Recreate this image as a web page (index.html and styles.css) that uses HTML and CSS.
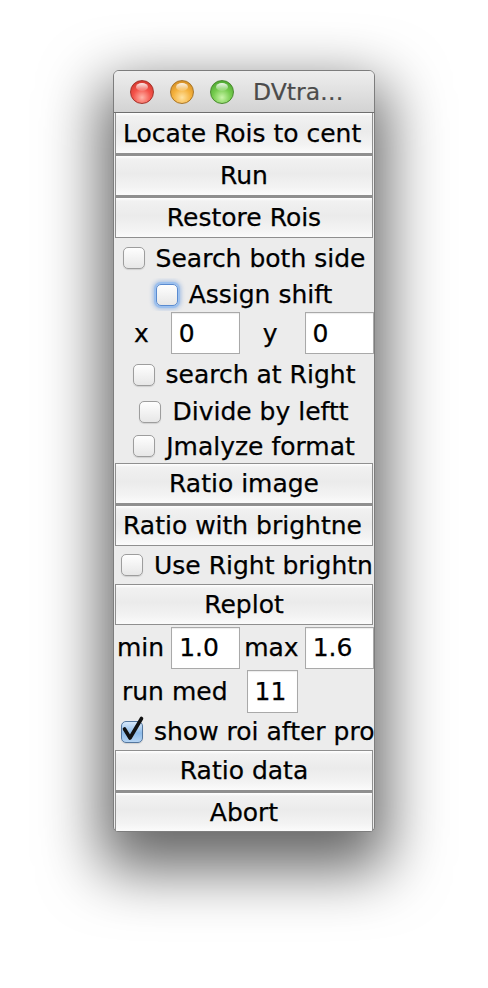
FILE: index.html
```html
<!DOCTYPE html>
<html>
<head>
<meta charset="utf-8">
<link rel="stylesheet" href="styles.css">
</head>
<body>
<div class="stage">
  <div class="window">
    <div class="titlebar">
      <span class="light red"></span>
      <span class="light yellow"></span>
      <span class="light green"></span>
      <span class="title">DVtra…</span>
    </div>
    <div class="content">
      <div class="btn first left">Locate Rois to cent</div>
      <div class="btn">Run</div>
      <div class="btn">Restore Rois</div>
      <div class="row check r40"><span class="box"></span><span>Search both side</span></div>
      <div class="row check r33"><span class="box focus"></span><span>Assign shift</span></div>
      <div class="row xy">
        <span class="lbl lx">x</span><span class="field fx">0</span>
        <span class="lbl ly">y</span><span class="field fy">0</span>
      </div>
      <div class="row check r39"><span class="box"></span><span>search at Right</span></div>
      <div class="row check r35"><span class="box"></span><span>Divide by leftt</span></div>
      <div class="row check r34"><span class="box"></span><span>Jmalyze format</span></div>
      <div class="btn">Ratio image</div>
      <div class="btn left">Ratio with brightne</div>
      <div class="row check left r38"><span class="box"></span><span>Use Right brightn</span></div>
      <div class="btn">Replot</div>
      <div class="row mm">
        <span class="lbl lmin">min</span><span class="field fmin">1.0</span>
        <span class="lbl lmax">max</span><span class="field fmax">1.6</span>
      </div>
      <div class="row rm">
        <span class="lbl lrun">run med</span><span class="field frun">11</span>
      </div>
      <div class="row check left r38b">
        <span class="box checked">
          <svg class="tick" width="24" height="26" viewBox="0 0 24 26"><path d="M3.5 13 L9 22 L20.5 2.5" fill="none" stroke="#111" stroke-width="3.6" stroke-linecap="round" stroke-linejoin="round"/></svg>
        </span><span>show roi after pro</span>
      </div>
      <div class="btn">Ratio data</div>
      <div class="btn last">Abort</div>
    </div>
  </div>
</div>
</body>
</html>
```

FILE: styles.css
```css
html, body {
  margin: 0;
  padding: 0;
  background: #ffffff;
}
body {
  font-family: "DejaVu Sans", "Liberation Sans", sans-serif;
  font-size: 25px;
  color: #000;
  -webkit-text-stroke: 0.25px #000;
}
.stage {
  height: 988px;
  box-sizing: border-box;
  padding-top: 70px;
  display: flex;
  justify-content: center;
  align-items: flex-start;
}
.window {
  width: 262px;
  box-sizing: border-box;
  border: 1px solid #7d7d7d;
  border-radius: 6px 6px 5px 5px;
  background: #ececec;
  box-shadow: 0 26px 60px 12px rgba(0, 0, 0, 0.6);
  overflow: hidden;
}
.titlebar {
  height: 41px;
  border-bottom: 1px solid #6e6e6e;
  background: linear-gradient(#eeeeee, #d3d3d3);
  display: flex;
  align-items: center;
  padding-left: 16px;
}
.light {
  width: 24px;
  height: 24px;
  border-radius: 50%;
  box-sizing: border-box;
  margin-right: 16px;
  position: relative;
  flex: none;
}
.light::after {
  content: "";
  position: absolute;
  left: 5px;
  top: 2px;
  width: 12px;
  height: 8px;
  border-radius: 50%;
  background: linear-gradient(rgba(255,255,255,0.9), rgba(255,255,255,0.1));
}
.red {
  background: radial-gradient(circle at 50% 75%, #ffb4a8 0%, #f4534a 45%, #c62b22 100%);
  border: 1px solid #a3342c;
}
.yellow {
  background: radial-gradient(circle at 50% 75%, #ffe2a0 0%, #f5b23d 45%, #c8801a 100%);
  border: 1px solid #a8762a;
}
.green {
  background: radial-gradient(circle at 50% 75%, #c9f5a8 0%, #76cc4e 45%, #3e9a26 100%);
  border: 1px solid #4a8a30;
}
.title {
  margin-left: 3px;
  color: #4b4b4b;
  -webkit-text-stroke: 0.2px #4b4b4b;
  font-size: 23.5px;
  white-space: nowrap;
}
.content {
  display: flex;
  flex-direction: column;
}
.btn {
  margin: 0 1px;
  height: 39px;
  border: 1px solid #8f8f8f;
  background: linear-gradient(#ffffff 0%, #f1f1f1 8%, #ebebeb 45%, #f3f3f3 80%, #fbfbfb 100%);
  display: flex;
  align-items: center;
  justify-content: center;
  padding: 0 7px;
  white-space: nowrap;
  overflow: hidden;
}
.btn + .btn {
  border-top-width: 2px;
}
.btn.first {
  border-top: 0;
  height: 40px;
}
.btn.left {
  justify-content: flex-start;
}
.btn.last {
  border-bottom: 0;
  height: 38px;
}
.row {
  display: flex;
  align-items: center;
  white-space: nowrap;
  overflow: hidden;
}
.check {
  justify-content: center;
  gap: 11px;
}
.check.left {
  justify-content: flex-start;
  padding-left: 7px;
}
.r40 { height: 40px; }
.r33 { height: 33px; }
.r39 { height: 39px; }
.r35 { height: 35px; }
.r34 { height: 34px; }
.r38 { height: 38px; }
.r38b { height: 37px; }
.box {
  width: 22px;
  height: 22px;
  box-sizing: border-box;
  border: 1px solid #9d9d9d;
  border-radius: 5px;
  background: linear-gradient(#fefefe, #e7e7e7);
  box-shadow: 0 1px 1px rgba(0, 0, 0, 0.12);
  flex: none;
  position: relative;
}
.box.focus {
  border-color: #5a8bd0;
  box-shadow: 0 0 0 2px #9cc0ee, 0 0 4px 3px rgba(70, 130, 215, 0.45);
}
.box.checked {
  border-color: #54779f;
  background: linear-gradient(#d6e8fa, #8dbbe9 55%, #b5d4f3);
}
.tick {
  position: absolute;
  left: -1px;
  top: -6px;
}
.field {
  height: 42px;
  box-sizing: border-box;
  border: 1px solid #a9a9a9;
  background: #ffffff;
  box-shadow: inset 0 1px 1px rgba(0, 0, 0, 0.08);
  display: flex;
  align-items: center;
  padding-left: 7px;
  flex: none;
}
.xy {
  height: 44px;
}
.lx { margin-left: 20px; }
.fx { margin-left: 22px; width: 69px; }
.ly { margin-left: 23px; }
.fy { margin-left: 27px; width: 69px; }
.mm {
  height: 44px;
  padding-top: 1px;
  box-sizing: border-box;
}
.lmin { margin-left: 3px; }
.fmin { margin-left: 7px; width: 69px; }
.lmax { margin-left: 4px; }
.fmax { margin-left: 6px; width: 69px; }
.rm {
  height: 44px;
}
.lrun { margin-left: 8px; }
.frun { margin-left: 19px; width: 51px; height: 43px; }
```
